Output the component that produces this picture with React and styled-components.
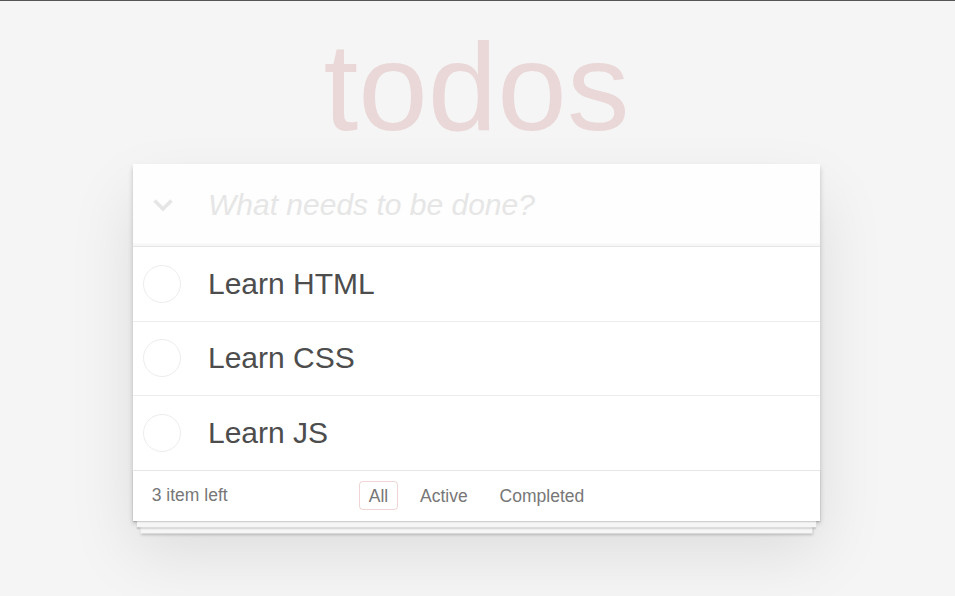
import React from 'react';
import styled, { createGlobalStyle } from 'styled-components';

const Global = createGlobalStyle`
  html, body { margin: 0; padding: 0; }
  body {
    min-height: 100vh;
    background: #f5f5f5;
    border-top: 1px solid #555555;
    font-family: "Liberation Sans", Arial, Helvetica, sans-serif;
    font-size: 17.5px;
    line-height: 24.5px;
    color: #4d4d4d;
  }
  * { box-sizing: border-box; }
`;

const Wrapper = styled.div`
  width: 687px;
  margin-left: calc(50% - 344.5px);
  padding-bottom: 60px;
`;

const Title = styled.h1`
  margin: 22.5px 0 0;
  font-size: 125px;
  line-height: 125px;
  font-weight: 400;
  text-align: center;
  color: rgba(175, 47, 47, 0.15);
`;

const Card = styled.section`
  margin-top: 15.5px;
  background: #fff;
  box-shadow: 0 2.5px 5px 0 rgba(0, 0, 0, 0.2), 0 31.25px 62.5px 0 rgba(0, 0, 0, 0.1);
`;

const Header = styled.header`
  display: grid;
  grid-template-columns: 75px 1fr;
  align-items: center;
  height: 82px;
  background: rgba(0, 0, 0, 0.003);
  box-shadow: inset 0 -2.5px 1.25px rgba(0, 0, 0, 0.03);
`;

const Chevron = styled.svg`
  display: block;
  margin-left: 19px;
`;

const NewTodo = styled.input`
  display: block;
  width: 100%;
  height: 42px;
  margin: 0;
  padding: 0 20px 0 0;
  border: none;
  outline: none;
  background: transparent;
  font-family: inherit;
  font-size: 30px;
  line-height: 42px;
  color: #4d4d4d;
  &::placeholder {
    font-style: italic;
    color: #e6e6e6;
  }
`;

const List = styled.ul`
  margin: 0;
  padding: 0;
  list-style: none;
  border-top: 1px solid #e6e6e6;
`;

const Item = styled.li`
  display: grid;
  grid-template-columns: 75px 1fr;
  align-items: center;
  border-bottom: 1px solid #ededed;
  &:last-child { border-bottom: none; }
`;

const Toggle = styled.span`
  display: block;
  width: 38px;
  height: 38px;
  margin-left: 10px;
  border: 1px solid #ededed;
  border-radius: 50%;
`;

const Label = styled.label`
  display: block;
  padding: 18.75px 18.75px 18.75px 0;
  font-size: 30px;
  line-height: 36px;
  color: #4d4d4d;
`;

const Footer = styled.footer`
  display: grid;
  grid-template-columns: 1fr auto 1fr;
  align-items: center;
  height: 51px;
  padding: 12.5px 18.75px;
  border-top: 1px solid #e6e6e6;
  color: #777777;
  background: #fff;
  box-shadow:
    0 1.25px 1.25px rgba(0, 0, 0, 0.2),
    0 10px 0 -3.75px #f6f6f6,
    0 11.25px 1.25px -3.75px rgba(0, 0, 0, 0.2),
    0 20px 0 -7.5px #f6f6f6,
    0 21.25px 2.5px -7.5px rgba(0, 0, 0, 0.2);
`;

const Count = styled.span`
  justify-self: start;
`;

const Filters = styled.ul`
  margin: 0;
  padding: 0;
  list-style: none;
  white-space: nowrap;
  & > li { display: inline; }
`;

const FilterLink = styled.a`
  color: inherit;
  margin: 3.75px;
  padding: 3.75px 8.75px;
  text-decoration: none;
  border: 1px solid ${(p) => (p.$selected ? 'rgba(175, 47, 47, 0.2)' : 'transparent')};
  border-radius: 3.75px;
  cursor: pointer;
`;

const todos = ['Learn HTML', 'Learn CSS', 'Learn JS'];

export default function App() {
  return (
    <>
      <Global />
      <Wrapper>
        <Title>todos</Title>
        <Card>
          <Header>
            <Chevron width="22" height="14" viewBox="0 0 22 14">
              <polyline points="2.5,2.5 11,11 19.5,2.5" fill="none" stroke="#e6e6e6" strokeWidth="3.6" />
            </Chevron>
            <NewTodo placeholder="What needs to be done?" />
          </Header>
          <List>
            {todos.map((t) => (
              <Item key={t}>
                <Toggle />
                <Label>{t}</Label>
              </Item>
            ))}
          </List>
          <Footer>
            <Count>3 item left</Count>
            <Filters>
              <li><FilterLink $selected>All</FilterLink></li>{' '}
              <li><FilterLink>Active</FilterLink></li>{' '}
              <li><FilterLink>Completed</FilterLink></li>
            </Filters>
            <span />
          </Footer>
        </Card>
      </Wrapper>
    </>
  );
}
